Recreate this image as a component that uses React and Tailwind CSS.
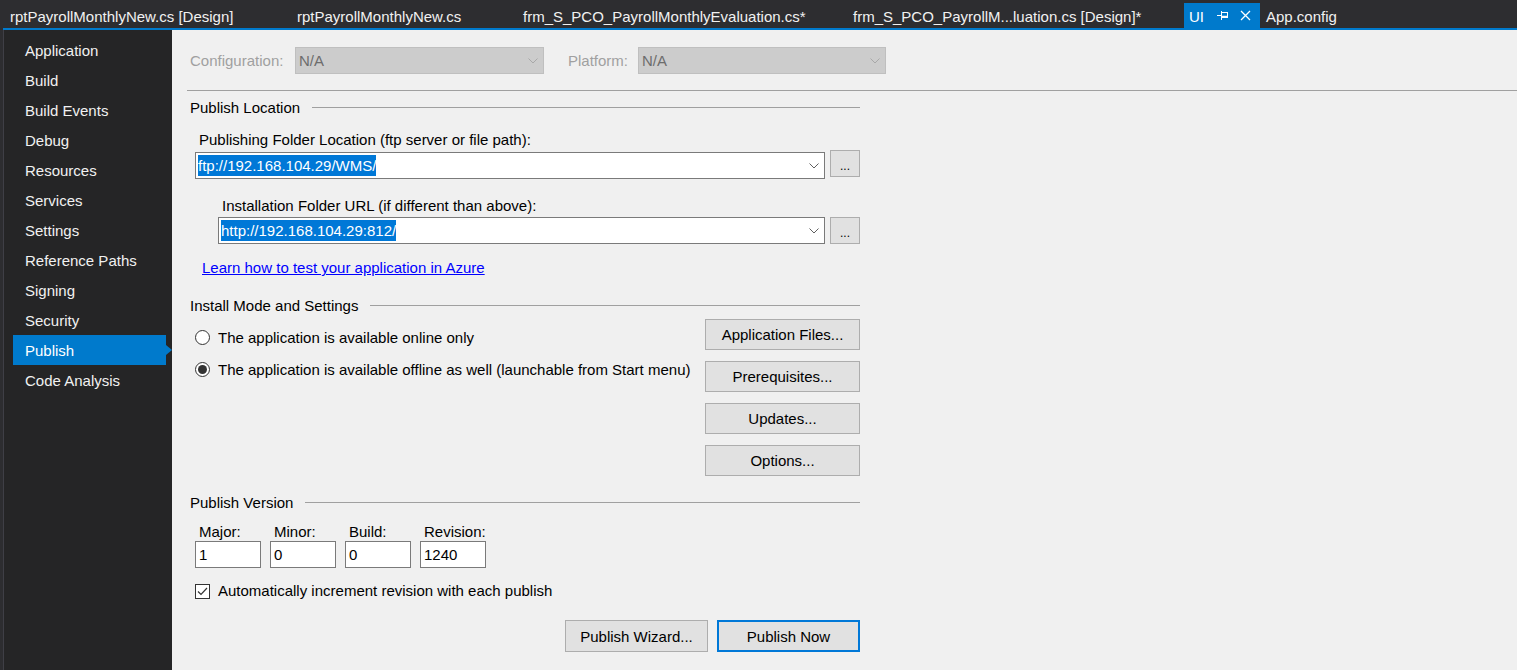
const navItems = [
  "Application",
  "Build",
  "Build Events",
  "Debug",
  "Resources",
  "Services",
  "Settings",
  "Reference Paths",
  "Signing",
  "Security",
  "Publish",
  "Code Analysis",
];

function Chevron({ color = "#606060" }) {
  return (
    <svg width="10" height="6" viewBox="0 0 10 6">
      <path d="M0.5 0.5 L5 5 L9.5 0.5" fill="none" stroke={color} strokeWidth="1" />
    </svg>
  );
}

function PinIcon() {
  return (
    <svg width="11" height="9" viewBox="0 0 11 9">
      <path d="M0 4.5 H4.5 M4.5 0 V9" stroke="#ffffff" strokeWidth="1" fill="none" />
      <rect x="4.5" y="1.5" width="6" height="5" stroke="#ffffff" strokeWidth="1" fill="none" />
      <path d="M4.5 5.5 H10.5" stroke="#ffffff" strokeWidth="1.5" />
    </svg>
  );
}

function CloseIcon() {
  return (
    <svg width="11" height="11" viewBox="0 0 11 11">
      <path d="M1 1 L10 10 M10 1 L1 10" stroke="#ffffff" strokeWidth="1.3" fill="none" />
    </svg>
  );
}

function SectionHeader({ title }) {
  return (
    <div className="flex h-[20px] items-center">
      <span className="pt-[2px] pl-[3px] leading-[20px] whitespace-nowrap">{title}</span>
      <div className="ml-[12px] h-px flex-1 bg-[#a0a0a0]" />
    </div>
  );
}

function Combo({ value, className }) {
  return (
    <div
      className={`flex h-[27px] items-center border border-[#7a7a7a] bg-white pl-[2px] pr-[5px] ${className}`}
    >
      <span className="bg-[#0078d7] pt-[1px] leading-[20px] text-white whitespace-nowrap">{value}</span>
      <div className="flex-1" />
      <Chevron />
    </div>
  );
}

function DotsButton({ className = "" }) {
  return (
    <div
      className={`flex h-[27px] w-[30px] items-center justify-center border border-[#adadad] bg-[#e1e1e1] text-[12px] leading-none ${className}`}
    >
      <span className="pt-[4px]">...</span>
    </div>
  );
}

function Button({ children, className = "" }) {
  return (
    <div
      className={`flex items-center justify-center border border-[#adadad] bg-[#e1e1e1] pt-[2px] ${className}`}
    >
      {children}
    </div>
  );
}

function Radio({ checked, label }) {
  return (
    <div className="flex h-[20px] items-center">
      <span className="ml-[8px] flex h-[15px] w-[15px] items-center justify-center rounded-full border border-[#333333] bg-white">
        {checked && <span className="h-[9px] w-[9px] rounded-full bg-[#333333]" />}
      </span>
      <span className="ml-[8px] pt-[2px] whitespace-nowrap">{label}</span>
    </div>
  );
}

function DisabledSelect({ className }) {
  return (
    <div
      className={`flex h-[27px] items-center border border-[#bfbfbf] bg-[#cccccc] pl-[3px] pr-[5px] text-[#6d6d6d] ${className}`}
    >
      <span className="pt-[1px]">N/A</span>
      <div className="flex-1" />
      <Chevron color="#a8a8a8" />
    </div>
  );
}

export default function App() {
  const versions = [
    { label: "Major:", value: "1" },
    { label: "Minor:", value: "0" },
    { label: "Build:", value: "0" },
    { label: "Revision:", value: "1240" },
  ];

  return (
    <div className="flex h-[670px] w-[1517px] flex-col overflow-hidden bg-[#f0f0f0] font-['Liberation_Sans',Arial,sans-serif] text-[15px] text-black">
      {/* document tabs */}
      <div className="flex h-[28px] items-end bg-[#2d2d30] text-[#f1f1f1]">
        <div className="h-[25px] w-[287px] pl-[10px] pt-px leading-[25px] whitespace-nowrap">
          rptPayrollMonthlyNew.cs [Design]
        </div>
        <div className="h-[25px] w-[226px] pl-[10px] pt-px leading-[25px] whitespace-nowrap">
          rptPayrollMonthlyNew.cs
        </div>
        <div className="h-[25px] w-[330px] pl-[10px] pt-px leading-[25px] whitespace-nowrap">
          frm_S_PCO_PayrollMonthlyEvaluation.cs*
        </div>
        <div className="h-[25px] w-[341px] pl-[10px] pt-px leading-[25px] whitespace-nowrap">
          frm_S_PCO_PayrollM...luation.cs [Design]*
        </div>
        <div className="flex h-[25px] w-[76px] items-center bg-[#007acc] pl-[5px] text-white">
          <span className="pt-px leading-[25px]">UI</span>
          <span className="ml-[13px] flex">
            <PinIcon />
          </span>
          <span className="ml-[12px] flex">
            <CloseIcon />
          </span>
        </div>
        <div className="h-[25px] pl-[6px] pt-px leading-[25px] whitespace-nowrap">App.config</div>
      </div>
      <div className="flex h-[2px]">
        <div className="w-[3px] bg-[#2d2d30]" />
        <div className="flex-1 bg-[#007acc]" />
      </div>

      <div className="flex flex-1">
        {/* sidebar */}
        <div className="flex w-[172px] bg-[#252526]">
          <div className="w-[3px] bg-[#2d2d30]" />
          <div className="w-px bg-[#3f3f46]" />
          <div className="flex flex-1 flex-col pt-[5px] text-[#f1f1f1]">
            {navItems.map((item) =>
              item === "Publish" ? (
                <div key={item} className="relative ml-[9px] mr-[6px] flex h-[30px] items-center bg-[#007acc] pl-[12px] pt-[2px] text-white">
                  {item}
                  <span className="absolute top-[10px] -right-[6px] h-0 w-0 border-y-[5px] border-l-[6px] border-y-transparent border-l-[#007acc]" />
                </div>
              ) : (
                <div key={item} className="flex h-[30px] items-center pl-[21px] pt-[2px]">
                  {item}
                </div>
              )
            )}
          </div>
        </div>

        {/* content */}
        <div className="flex flex-1 flex-col pl-[15px]">
          <div className="mt-[17px] ml-[3px] flex items-center text-[#a0a0a0]">
            <span className="w-[105px] pt-[2px]">Configuration:</span>
            <DisabledSelect className="w-[249px]" />
            <span className="ml-[24px] w-[70px] pt-[2px]">Platform:</span>
            <DisabledSelect className="w-[248px]" />
          </div>
          <div className="mt-[16px] h-px bg-[#a0a0a0]" />

          <div className="flex w-[673px] flex-col">
            <div className="mt-[6px]">
              <SectionHeader title="Publish Location" />
            </div>
            <div className="mt-[12px] pl-[12px] pt-[1px] leading-[20px]">
              Publishing Folder Location (ftp server or file path):
            </div>
            <div className="flex items-start">
              <Combo value="ftp://192.168.104.29/WMS/" className="mt-[2px] ml-[8px] w-[630px]" />
              <DotsButton className="ml-[5px]" />
            </div>
            <div className="mt-[16px] pl-[35px] pt-[1px] leading-[20px]">
              Installation Folder URL (if different than above):
            </div>
            <div className="mt-[1px] flex items-start">
              <Combo value="http://192.168.104.29:812/" className="ml-[31px] w-[607px]" />
              <DotsButton className="ml-[5px]" />
            </div>
            <div className="mt-[13px] pl-[15px] pt-[1px] leading-[20px]">
              <span className="text-[#0000ff] underline">Learn how to test your application in Azure</span>
            </div>

            <div className="mt-[17px]">
              <SectionHeader title="Install Mode and Settings" />
            </div>
            <div className="mt-[4px] flex">
              <div className="flex flex-1 flex-col gap-[12px] pt-[8px]">
                <Radio label="The application is available online only" />
                <Radio checked label="The application is available offline as well (launchable from Start menu)" />
              </div>
              <div className="flex w-[155px] flex-col gap-[11px]">
                <Button className="h-[31px]">Application Files...</Button>
                <Button className="h-[31px]">Prerequisites...</Button>
                <Button className="h-[31px]">Updates...</Button>
                <Button className="h-[31px]">Options...</Button>
              </div>
            </div>

            <div className="mt-[16px]">
              <SectionHeader title="Publish Version" />
            </div>
            <div className="mt-[9px] ml-[8px] flex gap-[9px]">
              {versions.map((v) => (
                <div key={v.label} className="flex w-[66px] flex-col">
                  <span className="h-[20px] pl-[4px] pt-[1px] leading-[20px]">{v.label}</span>
                  <div className="flex h-[27px] items-center border border-[#7a7a7a] bg-white pl-[3px] pt-[1px]">
                    {v.value}
                  </div>
                </div>
              ))}
            </div>
            <div className="mt-[13px] flex h-[20px] items-center">
              <span className="ml-[8px] flex h-[15px] w-[15px] items-center justify-center border border-[#333333] bg-white">
                <svg width="11" height="9" viewBox="0 0 11 9">
                  <path d="M1 4.5 L4 7.5 L10 1" fill="none" stroke="#333333" strokeWidth="1.2" />
                </svg>
              </span>
              <span className="ml-[8px] pt-[1px]">Automatically increment revision with each publish</span>
            </div>
            <div className="mt-[19px] flex justify-end gap-[9px]">
              <Button className="h-[32px] w-[143px]">Publish Wizard...</Button>
              <div className="flex h-[32px] w-[143px] items-center justify-center border-2 border-[#0078d7] bg-[#e1e1e1] pt-[2px]">
                Publish Now
              </div>
            </div>
          </div>
        </div>
      </div>
    </div>
  );
}
